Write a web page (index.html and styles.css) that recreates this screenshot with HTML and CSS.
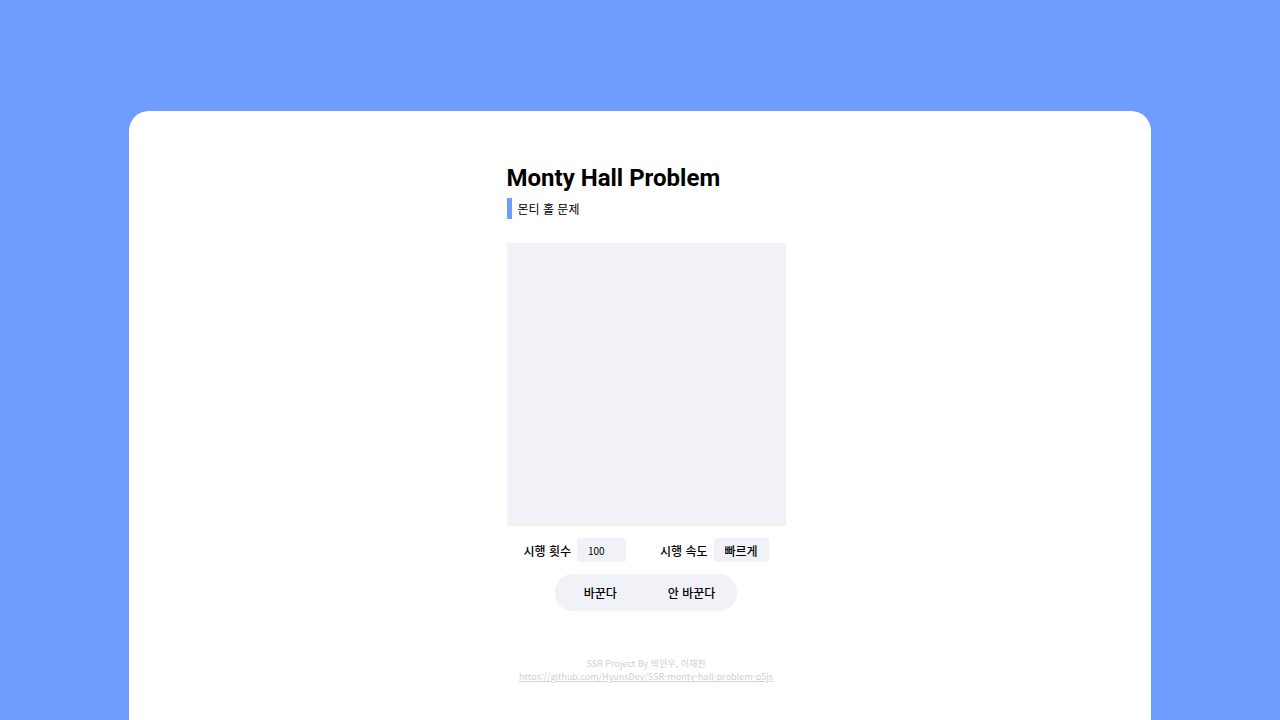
FILE: index.html
```html
<!DOCTYPE html>
<html lang="ko">
<head>
<meta charset="utf-8">
<meta name="viewport" content="width=device-width, initial-scale=1">
<title>Monty Hall Problem</title>
<link rel="stylesheet" href="styles.css">
</head>
<body>
<main class="card">
  <div class="content">
    <header class="heading">
      <h1 class="title">Monty Hall Problem</h1>
      <p class="subtitle">몬티 홀 문제</p>
    </header>
    <div class="board"></div>
    <form class="controls">
      <div class="options">
        <div class="option">
          <label for="count">시행 횟수</label>
          <input class="field count" id="count" type="text" inputmode="numeric" value="100">
        </div>
        <div class="option">
          <label for="speed">시행 속도</label>
          <select class="field speed" id="speed">
            <option>빠르게</option>
          </select>
        </div>
      </div>
      <div class="actions">
        <button class="action" type="button">바꾼다</button>
        <button class="action" type="button">안 바꾼다</button>
      </div>
    </form>
    <footer class="footer">
      <p class="credit">SSR Project By 박현우, 이재진</p>
      <a class="link" href="https://github.com/HyunsDev/SSR-monty-hall-problem-p5js">https://github.com/HyunsDev/SSR-monty-hall-problem-p5js</a>
    </footer>
  </div>
</main>
</body>
</html>
```
FILE: styles.css
```css
* {
  box-sizing: border-box;
}

body {
  margin: 0;
  min-height: 100vh;
  display: flex;
  flex-direction: column;
  align-items: center;
  padding-top: 111px;
  background: #6e9cff;
  color: #000;
  font: 500 12px/18px "Noto Sans CJK KR", sans-serif;
}

.card {
  flex: 1;
  width: calc(80% - 2px);
  display: flex;
  justify-content: center;
  padding: 52px 0 32px 12px;
  border-radius: 20px 20px 0 0;
  background: #fff;
}

.content {
  width: 100%;
  max-width: 279px;
}

.title {
  margin: 0 0 5px;
  font: 700 24px/30px Roboto, sans-serif;
  white-space: nowrap;
}

.subtitle {
  margin: 0 0 24px;
  padding: 2px 0 1px 6px;
  border-left: 5px solid #6e9cff;
  font-weight: 400;
}

.board {
  height: 283px;
  background: #f0f2f8;
}

.controls {
  display: flex;
  flex-direction: column;
  align-items: center;
  gap: 12px;
  margin: 12px 0 46px;
}

.options {
  display: flex;
  gap: 34px;
}

.option {
  display: flex;
  align-items: center;
  gap: 6px;
}

.option label {
  padding-top: 2px;
}

.field {
  height: 24px;
  margin: 0;
  padding: 1px 10px 0 11px;
  border: 0;
  border-radius: 3px;
  background: #f0f2f8;
  color: inherit;
  font: inherit;
  appearance: none;
}

.count {
  width: 49px;
  padding-top: 0;
  font-size: 10px;
  font-weight: 400;
}

.speed {
  width: 55px;
}

.actions {
  display: flex;
  border-radius: 18px;
  background: #f0f2f8;
  overflow: hidden;
}

.action {
  height: 37px;
  padding: 0 22px 0 29px;
  border: 0;
  background: none;
  color: inherit;
  font: inherit;
}

.footer {
  display: flex;
  flex-direction: column;
  align-items: center;
  color: #d0d0d0;
  font-size: 9px;
  font-weight: 400;
  line-height: 13px;
}

.credit {
  margin: 0;
}

.link {
  color: inherit;
  white-space: nowrap;
}
```
